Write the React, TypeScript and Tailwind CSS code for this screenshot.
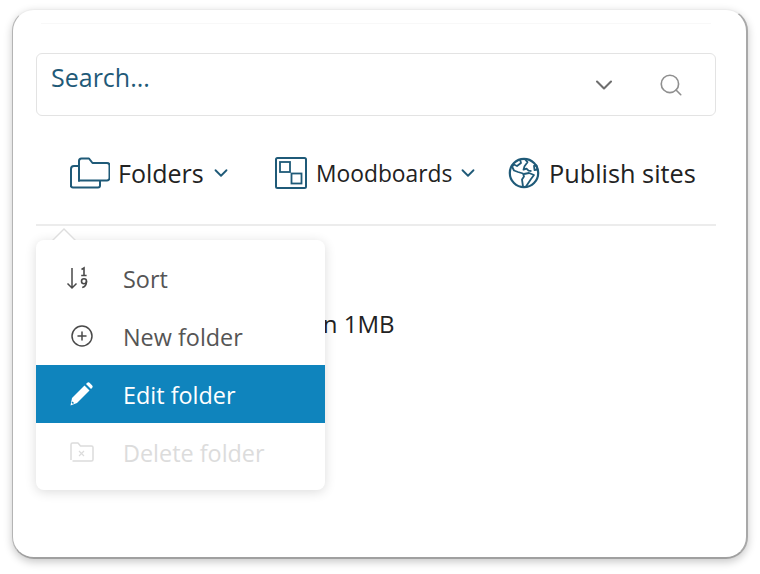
import React from 'react';
import { ChevronDown, Search, CirclePlus } from 'lucide-react';

const teal = '#1f5a78';

const FoldersIcon = () => (
  <svg width="40" height="32" viewBox="0 0 40 32" fill="none" stroke={teal} strokeWidth="2" strokeLinejoin="round" className="shrink-0">
    <path d="M1 30V12a3 3 0 0 1 3-3h5" />
    <path d="M9 24V4a2.500 2.500 0 0 1 2.500-2.500h7.500l3.500 4.500h14.500a2.500 2.500 0 0 1 2.500 2.500V21a2.500 2.500 0 0 1-2.500 2.500H9z" />
    <path d="M1 28.500a2 2 0 0 0 2 2h25a2 2 0 0 0 2-2v-5" />
  </svg>
);

const BoardsIcon = () => (
  <svg width="32" height="32" viewBox="0 0 32 32" fill="none" stroke={teal} strokeWidth="2" className="shrink-0">
    <rect x="1" y="1" width="30" height="30" rx="1.500" />
    <rect x="5" y="5" width="10" height="10" strokeWidth="1.800" />
    <rect x="16.500" y="16.500" width="10" height="10" strokeWidth="1.800" />
  </svg>
);

const GlobeIcon = () => (
  <svg width="32" height="32" viewBox="0 0 32 32" fill="none" stroke={teal} strokeWidth="2" strokeLinejoin="round" className="shrink-0">
    <circle cx="16" cy="16" r="14.200" strokeWidth="2.200" />
    <path d="M12 2.500l1 3.500-4 3-3-1.500-2 2 2 4 4 1.500 5 1.500 1 3-2 3 1 7" strokeWidth="1.800" />
    <path d="M17 2.200l2.500 3-3 4-1 3.500 3-1 2 2 3 .5" strokeWidth="1.800" />
    <path d="M16 17l5-1 5 2-3 4-2 3-3 4.500" strokeWidth="1.800" />
    <path d="M26 9l2.500-.5 1 4-3 .5z" strokeWidth="1.800" />
  </svg>
);

const SortIcon = () => (
  <svg width="24" height="24" viewBox="0 0 24 24" fill="none" stroke="#4a4a4a" className="shrink-0">
    <path d="M6 2v20M1.500 17.500L6 22l4.500-4.500" strokeWidth="1.500" />
    <path d="M15.500 3.500l2.500-1.500v7.500M15.200 9.500h5.400" strokeWidth="1.600" />
    <circle cx="18" cy="15.200" r="2.500" strokeWidth="1.600" />
    <path d="M20.500 15.200c0 3.400-1.300 5.600-4.300 6.300" strokeWidth="1.600" />
  </svg>
);

const PencilIcon = () => (
  <svg width="24" height="24" viewBox="0 0 24 24" className="shrink-0">
    <path d="M3 16L15.500 3.500l5 5L8 21l-6.500 2.500z" fill="white" />
    <path d="M17 2l1-1a2 2 0 0 1 2.800 0l2.200 2.200a2 2 0 0 1 0 2.800l-1 1z" fill="white" />
    <path d="M3 20l1.500 1.500" stroke="#0f84bd" strokeWidth="1.500" />
  </svg>
);

const DeleteFolderIcon = () => (
  <svg width="24" height="20" viewBox="0 0 24 20" fill="none" stroke="#dcdcdc" strokeWidth="1.500" strokeLinejoin="round" className="shrink-0">
    <path d="M1 18V2.500A1.500 1.500 0 0 1 2.500 1H8l2.500 3H21.500A1.500 1.500 0 0 1 23 5.500V17.500A1.500 1.500 0 0 1 21.500 19H2.500" />
    <path d="M9 9l5 5M14 9l-5 5" strokeWidth="1.200" />
  </svg>
);

export default function App() {
  return (
    <div className="w-[760px] h-[574px] bg-white p-[12px] pt-[9px] pb-[15px] font-['Open_Sans','Noto_Sans',sans-serif]">
      <div className="relative h-full rounded-[22px] bg-white border-l border-r-2 border-b-2 border-t border-l-[#b4b4b4] border-r-[#a8a8a8] border-b-[#a0a0a0] border-t-[#ececec] shadow-[0_3px_8px_rgba(0,0,0,0.22)] pl-[23px] pr-[30px]">
        <div className="mx-[5px] h-[14px] border-b border-[#f8f8f8]" />

        <div className="mt-[29px] h-[63px] flex items-start justify-between rounded-[6px] border border-[#e3e3e3] pl-[14px] pr-[31px]">
          <span className="text-[25px] leading-[46px] text-[#1f5a78]">Search...</span>
          <div className="flex items-center gap-[40px] pt-[17px] text-[#8f8f8f]">
            <ChevronDown size={28} strokeWidth={1.800} className="text-[#6e6e6e]" />
            <Search size={26} strokeWidth={1.500} />
          </div>
        </div>

        <div className="h-[110px] flex items-center border-b-2 border-[#ececec] pl-[34px] pt-[6px]">
          <div className="flex items-center w-[205px]">
            <FoldersIcon />
            <span className="ml-[8px] pt-[2px] text-[25px] text-[#222222]">Folders</span>
            <ChevronDown size={22} strokeWidth={2} color={teal} className="ml-[6px]" />
          </div>
          <div className="flex items-center w-[234px]">
            <BoardsIcon />
            <span className="ml-[9px] pt-[2px] text-[22.800px] text-[#222222]">Moodboards</span>
            <ChevronDown size={22} strokeWidth={2} color={teal} className="ml-[5px]" />
          </div>
          <div className="flex items-center -ml-[1px]">
            <GlobeIcon />
            <span className="ml-[9px] pt-[2px] text-[25.300px] text-[#222222] whitespace-nowrap">Publish sites</span>
          </div>
        </div>

        <div className="relative">
          <p className="pt-[82px] pl-[195px] text-[24px] leading-[32px] text-[#222222] whitespace-nowrap">Less than 1MB</p>

          <div className="absolute left-0 top-[14px] w-[289px] rounded-[8px] bg-white shadow-[0_2px_12px_rgba(0,0,0,0.14)] pt-[9px] pb-[9px]">
            <div className="absolute left-[16px] -top-[12px] w-0 h-0 border-x-[12px] border-x-transparent border-b-[12px] border-b-[#dedede]" />
            <div className="absolute left-[17px] -top-[10px] w-0 h-0 border-x-[11px] border-x-transparent border-b-[11px] border-b-white" />
            <div className="h-[58px] flex items-center pl-[30px] text-[23.400px] text-[#555555]">
              <div className="w-[57px]"><SortIcon /></div>
              <span className="pt-[3px]">Sort</span>
            </div>
            <div className="h-[58px] flex items-center pl-[34px] text-[23.400px] text-[#555555]">
              <div className="w-[53px]"><CirclePlus size={24} strokeWidth={1.500} color="#4a4a4a" /></div>
              <span className="pt-[3px]">New folder</span>
            </div>
            <div className="h-[58px] flex items-center pl-[33px] text-[23.400px] text-white bg-[#0f84bd]">
              <div className="w-[54px]"><PencilIcon /></div>
              <span className="pt-[3px]">Edit folder</span>
            </div>
            <div className="h-[58px] flex items-center pl-[34px] text-[23.400px] text-[#dcdcdc]">
              <div className="w-[53px]"><DeleteFolderIcon /></div>
              <span className="pt-[3px]">Delete folder</span>
            </div>
          </div>
        </div>
      </div>
    </div>
  );
}
